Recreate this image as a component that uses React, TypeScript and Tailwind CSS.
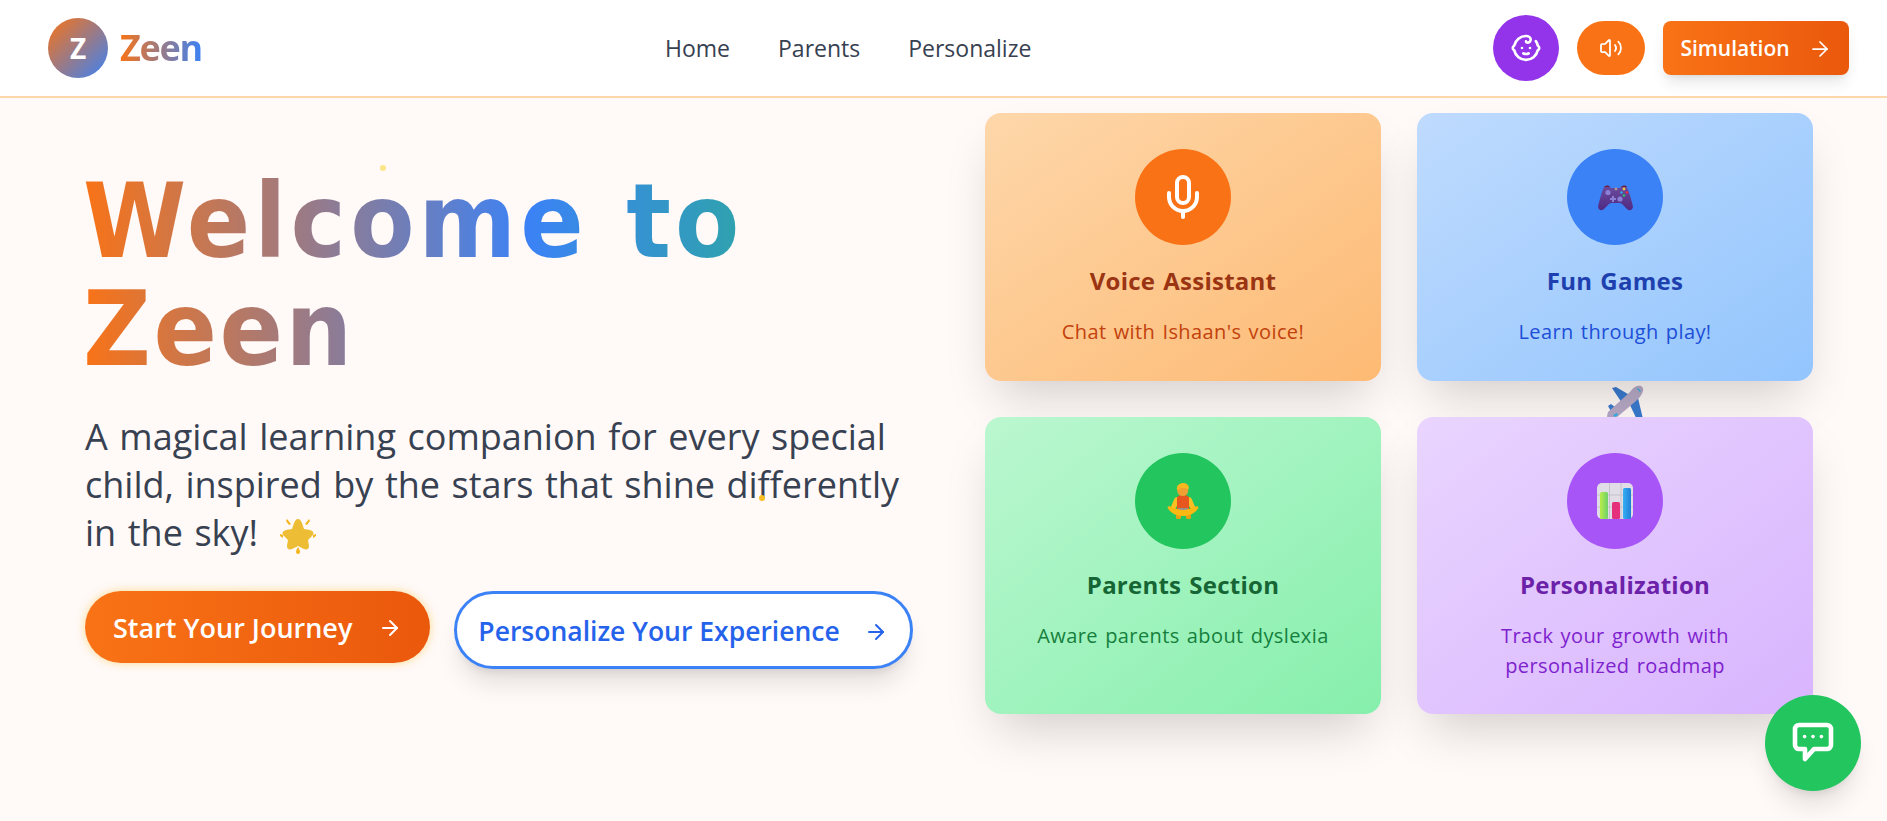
import React from 'react';
import { ArrowRight, Baby, Mic, Volume2 } from 'lucide-react';

const GamepadEmoji = () => (
  <svg width="35" height="27" viewBox="0 0 35 27">
    <defs>
      <linearGradient id="pad" x1="0" y1="0" x2="0" y2="1">
        <stop offset="0" stopColor="#6a4a9c" />
        <stop offset="1" stopColor="#4f2a85" />
      </linearGradient>
    </defs>
    <path d="M6 3h6l1 1h9l1-1h6v1c2 3 5 14 6 19-1 4-4 4-6 2l-5-5c-1-1-2-1-3-1H14c-1 0-2 0-3 1l-5 5c-2 2-5 2-6-2 1-5 4-16 6-20z" fill="url(#pad)" />
    <path d="M6 3c2-2 5-2 6 0zM23 3c2-2 5-2 6 0z" fill="#6b1f3f" />
    <circle cx="10" cy="8.5" r="2.6" fill="#8b7fd6" />
    <circle cx="22" cy="15" r="2.6" fill="#8b7fd6" />
    <rect x="12" y="14" width="6" height="2" fill="#8b7fd6" />
    <rect x="14" y="12" width="2" height="6" fill="#8b7fd6" />
    <circle cx="18" cy="5" r="1.4" fill="#a99a9a" />
    <circle cx="26" cy="5" r="1.4" fill="#f5c542" />
    <circle cx="23.5" cy="8.5" r="1.3" fill="#2fa8e0" />
    <circle cx="29" cy="8.5" r="1.3" fill="#ee2b4a" />
    <circle cx="26" cy="11.5" r="1.3" fill="#2fc26b" />
  </svg>
);

const MeditateEmoji = () => (
  <svg width="32" height="36" viewBox="0 0 32 36">
    <path d="M10 14c-2 0-3 2-4 5l-3 7 4 2 4-7zM22 14c2 0 3 2 4 5l3 7-4 2-4-7z" fill="#fbbf24" />
    <path d="M10 15c0-2 2-3 6-3s6 1 6 3v12H10z" fill="#e8561f" />
    <rect x="11" y="25" width="10" height="4" fill="#94908f" />
    <rect x="9" y="31" width="5" height="5" rx="1.5" fill="#e9a013" />
    <rect x="19" y="31" width="5" height="5" rx="1.5" fill="#e9a013" />
    <path d="M1 25.5C0 24 1 23 3 23.5c4 1 8 3.5 13 3.5s9-2.500 13-3.500c2-.5 3 .5 2 2-3 5-9 7.500-15 7.500S4 30.500 1 25.500z" fill="#fdb813" />
    <circle cx="15.700" cy="7.500" r="5.500" fill="#f0a030" />
    <path d="M10 7C9 2 13 0 16 0s7 2 5.500 6.500C19 4.500 14 4 10 7z" fill="#f9b820" />
  </svg>
);

const ChartEmoji = () => (
  <svg width="36" height="36" viewBox="0 0 36 36">
    <defs>
      <linearGradient id="barG" x1="0" y1="0" x2="1" y2="0">
        <stop offset="0" stopColor="#b8ec4a" />
        <stop offset="1" stopColor="#6fd16a" />
      </linearGradient>
      <linearGradient id="barB" x1="0" y1="0" x2="1" y2="0">
        <stop offset="0" stopColor="#35b0f5" />
        <stop offset="1" stopColor="#1f7fd6" />
      </linearGradient>
    </defs>
    <rect width="36" height="36" rx="5" fill="#e0dde6" />
    <path d="M12.500 0v36M24 0v36M0 12h36M0 24h36" stroke="#c6c2cc" strokeWidth="1" />
    <rect x="3" y="9" width="8" height="27" rx="1.500" fill="url(#barG)" />
    <rect x="15" y="19" width="8" height="17" rx="1.500" fill="#e5307c" />
    <rect x="26" y="5" width="8" height="31" rx="1.500" fill="url(#barB)" />
  </svg>
);

const StarEmoji = () => (
  <svg width="36" height="36" viewBox="0 0 36 36" className="inline-block align-[-8px] ml-[10px]">
    <path d="M18 1c2 0 3 2 4 4l2 6 6 1c3 1 5 3 2 6l-4 4 1 6c0 3-2 4-5 3l-6-3-6 3c-3 1-5 0-5-3l1-6-4-4c-3-3-1-5 2-6l6-1 2-6c1-2 2-4 4-4z" fill="#ecbd35" />
    <path d="M7 1l4 5-2 1-3-4zM29 1l-4 5 2 1 3-4zM0 16l3 1v3l-3-2zM36 16l-3 1v3l3-2zM18 29c1 2 2 3 2 5a2 2 0 0 1-4 0c0-2 1-3 2-5z" fill="#f3b61f" />
  </svg>
);

const PlaneEmoji = () => (
  <svg width="40" height="40" viewBox="0 0 40 40">
    <path d="M7 3l4-1 17 10-9 9zM25 20l8-7 5 21-5 3z" fill="#3a7bd0" />
    <path d="M3 21l3-2 8 6-6 5z" fill="#3a7bd0" />
    <path d="M32 1c4-1 7 1 6 5-1 4-4 7-7 10L11 33c-2 1-6 2-8 1L2 31l1-4L25 7c2-3 4-5 7-6z" fill="#b7a9c6" />
    <path d="M33 3l3 3-1 1-3-3zM8 30l4-2 1 2-3 2z" fill="#35b0e8" />
  </svg>
);

const ChatIcon = () => (
  <svg width="48" height="48" viewBox="0 0 24 24" fill="none" stroke="currentColor" strokeWidth="2.300" strokeLinejoin="round">
    <path d="M5 3h14a2 2 0 0 1 2 2v8a2 2 0 0 1-2 2h-6.500L8 20v-5H5a2 2 0 0 1-2-2V5a2 2 0 0 1 2-2z" />
    <circle cx="7.800" cy="8.800" r="0.900" fill="currentColor" stroke="none" />
    <circle cx="12" cy="8.800" r="0.900" fill="currentColor" stroke="none" />
    <circle cx="16.200" cy="8.800" r="0.900" fill="currentColor" stroke="none" />
  </svg>
);

const cards = [
  {
    title: 'Voice Assistant',
    desc: "Chat with Ishaan's voice!",
    bg: 'from-[#fed7aa] to-[#fdba74]',
    circle: 'bg-[#f97316]',
    titleColor: 'text-[#9a3412]',
    descColor: 'text-[#c2410c]',
    icon: <Mic className="w-12 h-12 text-white" />,
  },
  {
    title: 'Fun Games',
    desc: 'Learn through play!',
    bg: 'from-[#bfdbfe] to-[#93c5fd]',
    circle: 'bg-[#3b82f6]',
    titleColor: 'text-[#1e40af]',
    descColor: 'text-[#1d4ed8]',
    icon: <GamepadEmoji />,
  },
  {
    title: 'Parents Section',
    desc: 'Aware parents about dyslexia',
    bg: 'from-[#bbf7d0] to-[#86efac]',
    circle: 'bg-[#22c55e]',
    titleColor: 'text-[#166534]',
    descColor: 'text-[#15803d]',
    icon: <MeditateEmoji />,
  },
  {
    title: 'Personalization',
    desc: 'Track your growth with personalized roadmap',
    bg: 'from-[#e9d5ff] to-[#d8b4fe]',
    circle: 'bg-[#a855f7]',
    titleColor: 'text-[#6b21a8]',
    descColor: 'text-[#7e22ce]',
    icon: <ChartEmoji />,
  },
];

export default function App() {
  return (
    <div className="relative h-[821px] overflow-hidden bg-[#fff9f7] font-['Open_Sans',sans-serif] [word-spacing:0.1em]">
      <header className="h-[98px] bg-white border-b-2 border-[#fed7aa] flex items-center pl-12 pr-[38px]">
        <div className="w-[491px] flex items-center gap-3">
          <div className="w-[60px] h-[60px] rounded-full bg-linear-to-br/srgb from-[#f97316] to-[#3b82f6] flex items-center justify-center text-white text-[28px] font-bold">
            Z
          </div>
          <span className="text-[36px] font-bold tracking-[-0.035em] bg-linear-to-r/srgb from-[#f97316] to-[#3b82f6] bg-clip-text text-transparent">
            Zeen
          </span>
        </div>
        <nav className="ml-[126px] flex gap-12 text-[23px] font-medium text-[#374151]">
          <span>Home</span>
          <span>Parents</span>
          <span>Personalize</span>
        </nav>
        <div className="ml-auto flex items-center gap-[18px]">
          <button className="w-[66px] h-[66px] rounded-full bg-[#9333ea] flex items-center justify-center text-white">
            <Baby className="w-8 h-8" />
          </button>
          <button className="w-[68px] h-[54px] rounded-full bg-[#f97316] flex items-center justify-center text-white">
            <Volume2 className="w-6 h-6" strokeWidth={1.75} />
          </button>
          <button className="w-[186px] h-[54px] pt-[2px] rounded-lg bg-linear-to-r/srgb from-[#f97316] to-[#ea580c] shadow-lg flex items-center justify-center gap-[18px] text-white text-[21px] font-semibold">
            Simulation
            <ArrowRight className="w-6 h-6" strokeWidth={1.75} />
          </button>
        </div>
      </header>

      <div className="absolute left-[1605px] top-[385px]">
        <PlaneEmoji />
      </div>

      <main className="relative flex pl-[85px] pt-[15px]">
        <div className="w-[900px] pt-[54px]">
          <h1 className="-ml-[2px] w-[890px] font-['DejaVu_Sans_Condensed','DejaVu_Sans',sans-serif] [font-stretch:condensed] text-[104px] leading-[108px] font-bold tracking-[0.025em] bg-linear-to-r/srgb from-[#f97316] via-[#3b82f6] to-[#22c55e] bg-clip-text text-transparent">
            <span className="tracking-[0.04em]">Welcome to</span>
            <br />
            Zeen
          </h1>
          <p className="mt-[30px] w-[850px] text-[36px] leading-[48px] text-[#374151] [word-spacing:2.200px]">
            A magical learning companion for every special child, inspired by the stars that shine differently in the sky! <StarEmoji />
          </p>
          <div className="mt-[34px] flex items-start gap-6">
            <button className="h-[72px] pl-7 pr-7 pt-[2px] rounded-full bg-linear-to-r/srgb from-[#f97316] to-[#ea580c] text-white text-[27px] font-semibold flex items-center gap-[26px] shadow-[0_0_8px_rgba(251,191,36,0.5)]">
              Start Your Journey
              <ArrowRight className="w-6 h-6" />
            </button>
            <button className="h-[78px] pl-[21px] pr-[22px] pt-[3px] rounded-full bg-white border-[3px] border-[#3b82f6] text-[#2563eb] text-[26.5px] font-semibold flex items-center gap-6 shadow-xl">
              Personalize Your Experience
              <ArrowRight className="w-6 h-6" />
            </button>
          </div>
        </div>

        <div className="grid grid-cols-[396px_396px] grid-rows-[268px_297px] gap-9">
          {cards.map((c) => (
            <div key={c.title} className={`relative rounded-2xl p-9 shadow-[0_25px_50px_-12px_rgba(0,0,0,0.18)] text-center bg-linear-to-br/srgb ${c.bg}`}>
              <div className={`mx-auto w-24 h-24 rounded-full flex items-center justify-center ${c.circle}`}>{c.icon}</div>
              <h3 className={`mt-[18px] text-[24px] font-bold tracking-[0.01em] ${c.titleColor}`}>{c.title}</h3>
              <p className={`mt-[18px] text-[20px] leading-[30px] tracking-[0.02em] ${c.descColor}`}>{c.desc}</p>
            </div>
          ))}
        </div>
      </main>

      <span className="absolute left-[380px] top-[165px] w-[6px] h-[6px] rounded-full bg-[#fde68a]" />
      <span className="absolute left-[759px] top-[495px] w-[6px] h-[6px] rounded-full bg-[#fbbf24]" />

      <button className="absolute right-[26px] bottom-[30px] w-24 h-24 rounded-full bg-[#22c55e] shadow-xl flex items-center justify-center text-white">
        <ChatIcon />
      </button>
    </div>
  );
}
